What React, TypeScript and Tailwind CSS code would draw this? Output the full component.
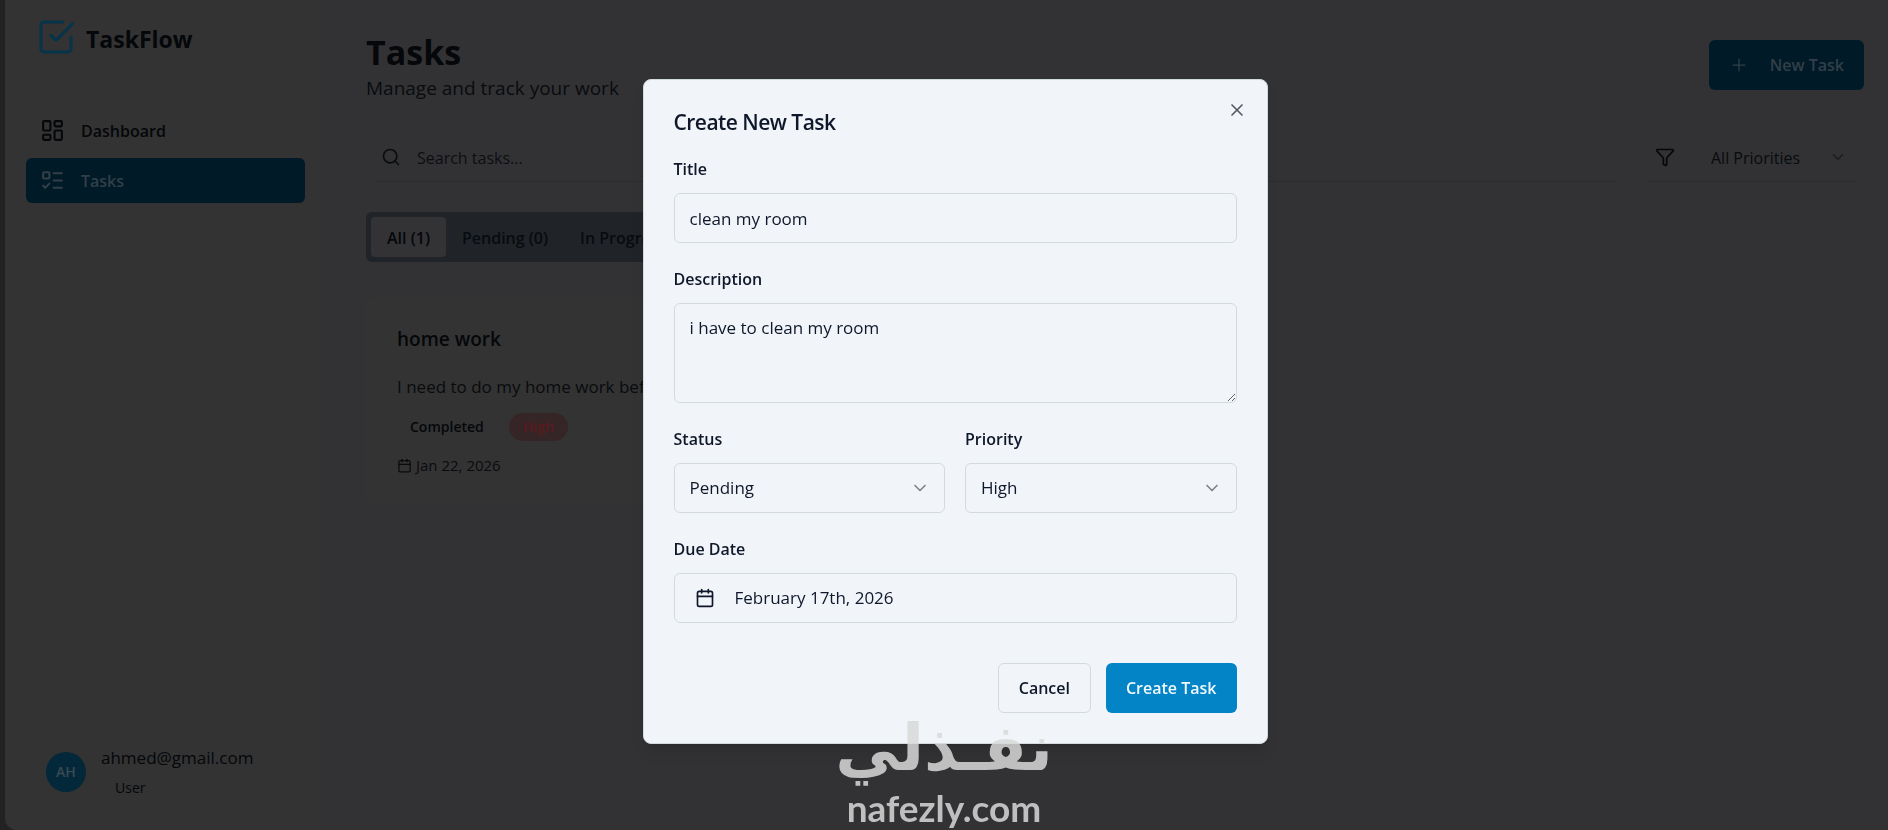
import React, { useState } from 'react';
import {
  Calendar,
  ChevronDown,
  Filter,
  LayoutDashboard,
  ListTodo,
  Plus,
  Search,
  X,
} from 'lucide-react';

const TABS = ['All (1)', 'Pending (0)', 'In Progress (0)', 'Completed (1)'];

const Logo: React.FC = () => (
  <svg
    viewBox="0 0 24 24"
    fill="none"
    stroke="currentColor"
    strokeWidth="1.8"
    strokeLinecap="round"
    strokeLinejoin="round"
    className="size-10 text-[#06344a]"
    aria-hidden="true"
  >
    <path d="m9 11 3 3L22 4" />
    <path d="M21 12v7a2 2 0 0 1-2 2H5a2 2 0 0 1-2-2V5a2 2 0 0 1 2-2h11" />
  </svg>
);

const Sidebar: React.FC = () => (
  <aside className="flex w-[315px] shrink-0 flex-col rounded-bl-xl bg-[#333333] pt-[17px] pr-[15px] pb-8 pl-[21px]">
    <div className="flex items-center gap-[10px] pl-[10px]">
      <Logo />
      <span className="pt-1 text-[23px] leading-8 font-bold text-[#05070a]">TaskFlow</span>
    </div>

    <nav className="mt-[51px] flex flex-col gap-[5px]">
      <a href="#dashboard" className="flex h-[45px] items-center gap-4 rounded-md px-[14px] text-[#05070a]">
        <LayoutDashboard size={25} />
        <span className="pt-px text-base font-semibold">Dashboard</span>
      </a>
      <a
        href="#tasks"
        className="flex h-[45px] items-center gap-4 rounded-md bg-[#001a28] px-[14px] text-[#323f47]"
      >
        <ListTodo size={25} />
        <span className="pt-px text-base font-semibold">Tasks</span>
      </a>
    </nav>

    {/* Signed in user */}
    <div className="mt-auto flex items-center gap-[15px] pl-5">
      <div className="flex size-10 items-center justify-center rounded-full bg-[#02283a] text-sm font-semibold text-[#3b4a53]">
        AH
      </div>
      <div>
        <p className="text-[17px] leading-6 font-medium text-[#05070a]">ahmed@gmail.com</p>
        <p className="mt-2 pl-[14px] text-sm leading-5 text-[#05070a]">User</p>
      </div>
    </div>
  </aside>
);

const TaskCard: React.FC = () => (
  <article className="rounded-lg bg-[#333333] px-[31px] pt-[28px] pb-[28px]">
    <h2 className="text-[19px] leading-7 font-semibold text-[#05070a]">home work</h2>
    <p className="mt-[22px] truncate text-[17px] leading-6 text-[#090b0e]">
      I need to do my home work before tomorrow
    </p>
    <div className="mt-[14px] flex items-center gap-3">
      <span className="rounded-full px-[13px] text-sm leading-7 font-semibold text-[#05070a]">Completed</span>
      <span className="rounded-full bg-[#362527] px-[14px] text-sm leading-7 font-semibold text-[#5a1a1e]">
        High
      </span>
    </div>
    <p className="mt-3 flex items-center gap-1 text-[15px] leading-6 text-[#090b0e]">
      <Calendar size={15} />
      Jan 22, 2026
    </p>
  </article>
);

const TasksPage: React.FC = () => (
  <main className="min-w-0 flex-1 bg-[#323234] pt-[30px] pr-6 pl-[46px]">
    <header className="flex items-start justify-between">
      <div>
        <h1 className="text-[34px] leading-[44px] font-bold text-[#05070a]">Tasks</h1>
        <p className="text-[19px] leading-7 text-[#090b0e]">Manage and track your work</p>
      </div>
      <button
        type="button"
        className="mt-[10px] flex h-[50px] items-center gap-[21px] rounded-md bg-[#001a28] px-5 text-base font-semibold text-[#323f47]"
      >
        <Plus size={20} strokeWidth={1.5} />
        New Task
      </button>
    </header>

    {/* Search and priority filter */}
    <div className="mt-[31px] flex gap-[31px] pr-2 pl-[10px]">
      <label className="flex h-[49px] flex-1 items-center gap-4 border-b border-[#2c2c2f] pl-[5px] text-[#0a0d10]">
        <Search size={20} />
        <input
          type="search"
          aria-label="Search tasks"
          placeholder="Search tasks..."
          className="flex-1 bg-transparent pt-px text-base outline-none placeholder:text-[#0c0e12]"
        />
      </label>
      <div className="flex h-[49px] w-[208px] items-center border-b border-[#2c2c2f] pr-[9px] pl-[7px] text-[#05070a]">
        <Filter size={20} />
        <div className="relative ml-9 flex-1">
          <select
            aria-label="Filter by priority"
            className="w-full appearance-none bg-transparent pt-px text-base text-[#090b0e] outline-none"
          >
            <option>All Priorities</option>
            <option>High</option>
            <option>Medium</option>
            <option>Low</option>
          </select>
          <ChevronDown
            size={18}
            className="pointer-events-none absolute top-[3px] right-0 text-[#1a1b1d]"
          />
        </div>
      </div>
    </div>

    <div className="mt-[30px] flex w-fit rounded-md bg-[#202428] p-[5px]" role="tablist">
      {TABS.map((tab, i) => (
        <button
          key={tab}
          type="button"
          role="tab"
          aria-selected={i === 0}
          className={
            i === 0
              ? 'h-10 rounded-sm bg-[#333335] px-4 pt-px text-base font-semibold text-[#05070a]'
              : 'h-10 rounded-sm px-4 pt-px text-base font-semibold text-[#080b0f]'
          }
        >
          {tab}
        </button>
      ))}
    </div>

    <section className="mt-[35px] grid grid-cols-3 gap-[30px]">
      <TaskCard />
    </section>
  </main>
);

type SelectFieldProps = {
  id: string;
  label: string;
  value: string;
  options: string[];
  onChange: (value: string) => void;
};

const SelectField: React.FC<SelectFieldProps> = ({ id, label, value, options, onChange }) => (
  <div>
    <label htmlFor={id} className="block text-base font-semibold">
      {label}
    </label>
    <div className="relative mt-3">
      <select
        id={id}
        value={value}
        onChange={(e) => onChange(e.target.value)}
        className="h-[50px] w-full appearance-none rounded-md border border-[#d3dadd] bg-transparent px-[15px] text-[17px]"
      >
        {options.map((option) => (
          <option key={option}>{option}</option>
        ))}
      </select>
      <ChevronDown
        size={20}
        className="pointer-events-none absolute top-[15px] right-[15px] text-[#808388]"
      />
    </div>
  </div>
);

const CreateTaskDialog: React.FC = () => {
  const [title, setTitle] = useState('clean my room');
  const [description, setDescription] = useState('i have to clean my room');
  const [status, setStatus] = useState('Pending');
  const [priority, setPriority] = useState('High');

  return (
    <div className="fixed inset-0 flex items-center justify-center pb-[7px] pl-[22px]">
      <div
        role="dialog"
        aria-modal="true"
        aria-labelledby="dialog-title"
        className="relative w-full max-w-[625px] rounded-lg border border-[#d3dadd] bg-[#f1f5f9] p-[30px] text-[#0f172a] shadow-lg"
      >
        <h2 id="dialog-title" className="text-[21px] leading-6 font-semibold tracking-tight">
          Create New Task
        </h2>
        <button type="button" aria-label="Close" className="absolute top-5 right-5 text-[#565b63]">
          <X size={20} />
        </button>

        <form className="mt-[23px] flex flex-col gap-6" onSubmit={(e) => e.preventDefault()}>
          <div>
            <label htmlFor="title" className="block text-base font-semibold">
              Title
            </label>
            <input
              id="title"
              type="text"
              value={title}
              onChange={(e) => setTitle(e.target.value)}
              className="mt-3 block h-[50px] w-full rounded-md border border-[#d3dadd] bg-transparent px-[15px] text-[17px]"
            />
          </div>

          <div>
            <label htmlFor="description" className="block text-base font-semibold">
              Description
            </label>
            <textarea
              id="description"
              value={description}
              onChange={(e) => setDescription(e.target.value)}
              className="mt-3 block h-[100px] w-full rounded-md border border-[#d3dadd] bg-transparent px-[15px] py-3 text-[17px] leading-6"
            />
          </div>

          <div className="grid grid-cols-2 gap-5">
            <SelectField
              id="status"
              label="Status"
              value={status}
              options={['Pending', 'In Progress', 'Completed']}
              onChange={setStatus}
            />
            <SelectField
              id="priority"
              label="Priority"
              value={priority}
              options={['Low', 'Medium', 'High']}
              onChange={setPriority}
            />
          </div>

          <div>
            <label htmlFor="due-date" className="block text-base font-semibold">
              Due Date
            </label>
            <button
              id="due-date"
              type="button"
              className="mt-3 flex h-[50px] w-full items-center gap-5 rounded-md border border-[#d3dadd] px-5 text-[17px]"
            >
              <Calendar size={20} />
              February 17th, 2026
            </button>
          </div>

          <div className="mt-4 flex justify-end gap-[15px]">
            <button
              type="button"
              className="h-[50px] rounded-md border border-[#d3dadd] px-5 text-base font-semibold"
            >
              Cancel
            </button>
            <button
              type="submit"
              className="h-[50px] rounded-md bg-[#0284c7] px-5 text-base font-semibold text-[#f0f9ff]"
            >
              Create Task
            </button>
          </div>
        </form>
      </div>
    </div>
  );
};

const Watermark: React.FC = () => (
  <div className="pointer-events-none fixed inset-x-0 bottom-0 flex flex-col items-center font-bold text-[#d9d9d9] opacity-85">
    <span lang="ar" dir="rtl" className="font-['DejaVu_Sans',sans-serif] text-[64px] leading-[76px]">
      نفـذلي
    </span>
    <span className="font-['Lato',sans-serif] text-[37px] leading-[44px]">nafezly.com</span>
  </div>
);

export default function App() {
  return (
    <div className="flex min-h-screen bg-[#222222] pl-[5px] font-['Open_Sans','Noto_Sans',sans-serif]">
      <Sidebar />
      <TasksPage />
      <CreateTaskDialog />
      <Watermark />
    </div>
  );
}
